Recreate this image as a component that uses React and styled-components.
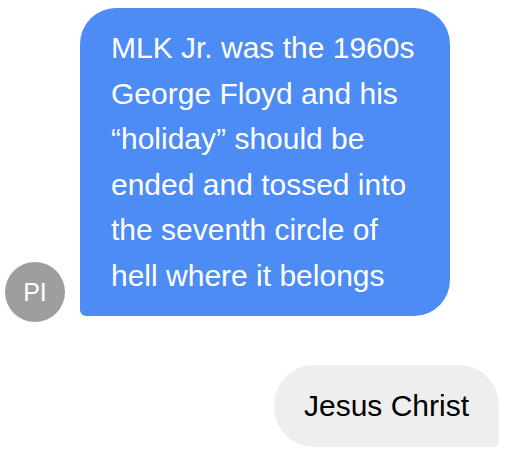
import React from "react";
import styled, { createGlobalStyle } from "styled-components";

const Global = createGlobalStyle`
  html, body { margin: 0; padding: 0; background: #ffffff; }
  body { font-family: "Liberation Sans", Arial, sans-serif; }
`;

const Thread = styled.div`
  width: 510px;
  box-sizing: border-box;
  padding: 8px 11px 0 5px;
  display: flex;
  flex-direction: column;
  gap: 49px;
`;

const Row = styled.div`
  display: flex;
  align-items: flex-end;
  justify-content: ${(p) => (p.$mine ? "flex-end" : "flex-start")};
  gap: 15px;
`;

const Avatar = styled.div`
  width: 60px;
  height: 60px;
  border-radius: 50%;
  background: #9e9e9e;
  color: #ffffff;
  display: flex;
  align-items: center;
  justify-content: center;
  font-size: 25px;
  flex-shrink: 0;
  margin-bottom: -6px;
`;

const Bubble = styled.div`
  box-sizing: border-box;
  font-size: 30px;
  line-height: 45.5px;
  padding: ${(p) => (p.$mine ? "18px 30px" : "17px 30px 18px 31px")};
  width: ${(p) => (p.$mine ? "auto" : "370px")};
  background: ${(p) => (p.$mine ? "#eeeeee" : "#4d8bf5")};
  color: ${(p) => (p.$mine ? "#000000" : "#ffffff")};
  border-radius: ${(p) => (p.$mine ? "40px 40px 6px 40px" : "36px 36px 36px 6px")};
`;

export default function App() {
  return (
    <>
      <Global />
      <Thread>
        <Row>
          <Avatar>PI</Avatar>
          <Bubble>
            MLK Jr. was the 1960s George Floyd and his “holiday” should be ended and tossed into the seventh circle of hell where it belongs
          </Bubble>
        </Row>
        <Row $mine>
          <Bubble $mine>Jesus Christ</Bubble>
        </Row>
      </Thread>
    </>
  );
}
